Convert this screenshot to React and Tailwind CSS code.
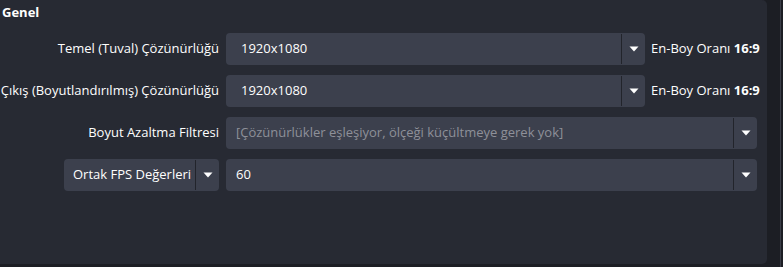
import React from 'react';

const font = { fontFamily: '"Open Sans", "Noto Sans", sans-serif' };

function Arrow() {
    return (
        <svg width="10" height="6" viewBox="0 0 10 6" className="block">
            <path d="M0.5 0.5 L9.5 0.5 L5 5.5 Z" fill="#ffffff" />
        </svg>
    );
}

function Combo({ value, muted, className = '' }) {
    return (
        <div className={`flex h-[32px] shrink-0 items-center rounded-[4px] bg-[#3c404d] ${className}`}>
            <span className={`flex-1 truncate pl-[10px] text-[13px] ${muted ? 'text-[#8e9099]' : 'text-[#fefefe]'}`}>{value}</span>
            <div className="h-[30px] w-px bg-[#22242b]" />
            <div className="flex w-[23px] items-center justify-center">
                <Arrow />
            </div>
        </div>
    );
}

export default function App() {
    const rows = [
        { label: 'Temel (Tuval) Çözünürlüğü', value: '1920x1080', aspect: true },
        { label: 'Çıkış (Boyutlandırılmış) Çözünürlüğü', value: '1920x1080', aspect: true },
        { label: 'Boyut Azaltma Filtresi', value: '[Çözünürlükler eşleşiyor, ölçeği küçültmeye gerek yok]', muted: true },
    ];

    return (
        <div className="flex h-[267px] w-[783px] bg-[#1c1e24] text-[#fefefe]" style={font}>
            <div className="flex h-[264px] w-[767px] flex-col rounded-r-[5px] bg-[#272a33]">
                <div className="pl-[2px] pt-[3px] text-[13px] font-bold leading-[18px]">Genel</div>

                {/* Form rows */}
                <div className="mt-[12px] grid grid-cols-[219px_531px] gap-x-[7px] gap-y-[10px]">
                    {rows.map(row => (
                        <React.Fragment key={row.label}>
                            <div className="flex h-[32px] items-center justify-end whitespace-nowrap text-[13px]">{row.label}</div>
                            <div className="flex items-center">
                                {row.aspect ? (
                                    <>
                                        <Combo value={row.value} className="w-[419px] [&>span]:pl-[15px]" />
                                        <span className="ml-[6px] shrink-0 whitespace-nowrap text-[13px]">En-Boy Oranı <b>16:9</b></span>
                                    </>
                                ) : (
                                    <Combo value={row.value} muted={row.muted} className="w-[531px]" />
                                )}
                            </div>
                        </React.Fragment>
                    ))}
                    <div className="flex justify-end">
                        <Combo value="Ortak FPS Değerleri" className="w-[155px] [&>span]:pl-[9px]" />
                    </div>
                    <Combo value="60" className="w-[531px]" />
                </div>
            </div>
            <div className="ml-[13px] h-full w-px bg-[#3a3d47]" />
        </div>
    );
}
